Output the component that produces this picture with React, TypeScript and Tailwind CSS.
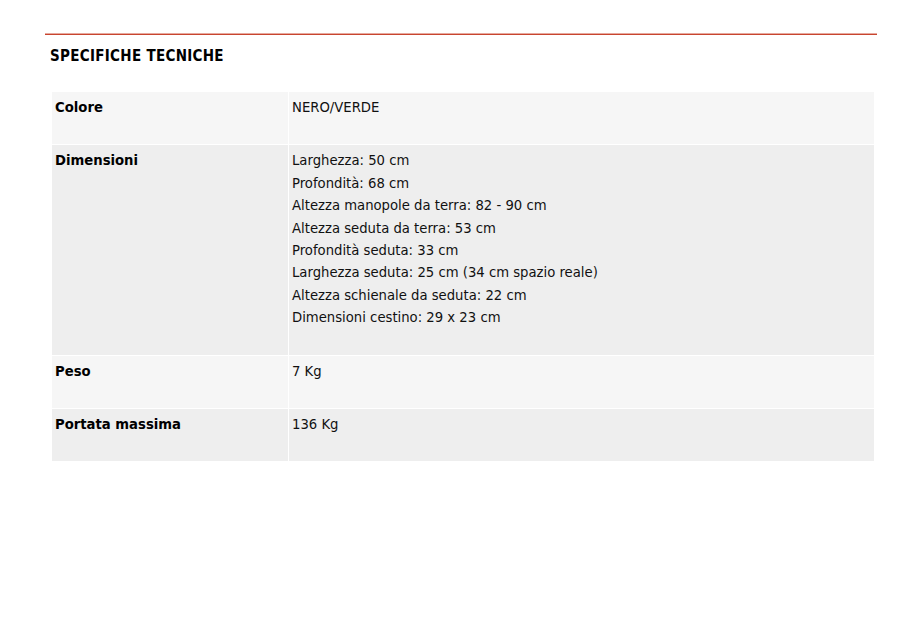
import React from "react";

const rows: { label: string; lines: string[]; bg: string }[] = [
  { label: "Colore", lines: ["NERO/VERDE"], bg: "bg-[#f6f6f6]" },
  {
    label: "Dimensioni",
    lines: [
      "Larghezza: 50 cm",
      "Profondità: 68 cm",
      "Altezza manopole da terra: 82 - 90 cm",
      "Altezza seduta da terra: 53 cm",
      "Profondità seduta: 33 cm",
      "Larghezza seduta: 25 cm (34 cm spazio reale)",
      "Altezza schienale da seduta: 22 cm",
      "Dimensioni cestino: 29 x 23 cm",
    ],
    bg: "bg-[#eeeeee]",
  },
  { label: "Peso", lines: ["7 Kg"], bg: "bg-[#f6f6f6]" },
  { label: "Portata massima", lines: ["136 Kg"], bg: "bg-[#eeeeee]" },
];

export default function App() {
  return (
    <div
      className="w-[920px] h-[642px] bg-white text-[#111] text-[14.7px] leading-[22.4px]"
      style={{ fontFamily: '"DejaVu Sans Condensed", "DejaVu Sans", sans-serif' }}
    >
      <div className="pt-[33px] px-[45px] pr-[43px]">
        <div className="h-[2px] bg-[#c8452f] border-t border-[#e6a99e]" />
        <h2 className="mt-[10px] ml-[5px] font-bold text-[15px] leading-[22px] tracking-[0.3px] text-black">
          SPECIFICHE TECNICHE
        </h2>
      </div>
      <div className="mt-[25px] ml-[52px] w-[822px] flex flex-col gap-px">
        {rows.map((r) => (
          <div key={r.label} className={`flex ${r.bg}`}>
            <div className="w-[236px] shrink-0 pl-[3px] pt-[4px] pb-[26px] font-bold text-black">
              {r.label}
            </div>
            <div className="w-px bg-white" />
            <div className="flex-1 pl-[3px] pt-[4px] pb-[26px]">
              {r.lines.map((l) => (
                <div key={l}>{l}</div>
              ))}
            </div>
          </div>
        ))}
      </div>
    </div>
  );
}
